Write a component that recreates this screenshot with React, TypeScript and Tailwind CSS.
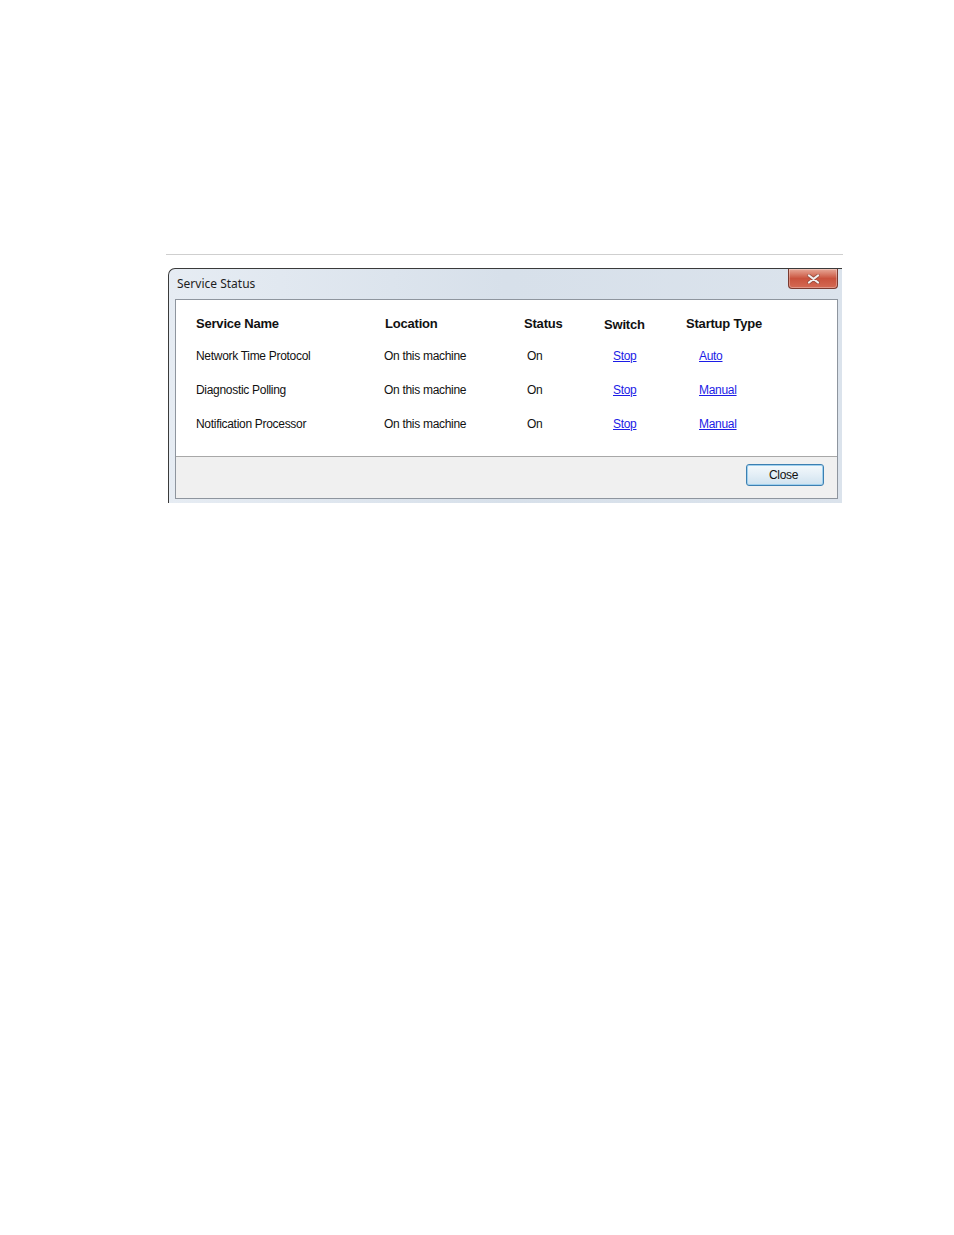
import React from "react";

const headers = [
  { t: "Service Name", w: "w-[188px]", pl: "pl-0" },
  { t: "Location", w: "w-[140px]", pl: "pl-[1px]" },
  { t: "Status", w: "w-[80px]", pl: "pl-0" },
  { t: "Switch", w: "w-[82px]", pl: "pl-0" },
  { t: "Startup Type", w: "w-[120px]", pl: "pl-0" },
];

const rows = [
  ["Network Time Protocol", "On this machine", "On", "Stop", "Auto"],
  ["Diagnostic Polling", "On this machine", "On", "Stop", "Manual"],
  ["Notification Processor", "On this machine", "On", "Stop", "Manual"],
];

export default function App() {
  return (
    <div className="w-[954px] h-[1235px] bg-white relative overflow-hidden" style={{ fontFamily: '"Liberation Sans", Arial, sans-serif' }}>
      <div className="pt-[254px]">
        <div className="ml-[166px] w-[677px] h-px bg-[#cfcfcf]" />
        <div className="mt-[13px] ml-[168px] w-[674px] h-[235px] rounded-tl-[7px] border-l border-t border-[#3a3a3a] bg-gradient-to-r from-[#e6ecf3] via-[#d7e0ea] to-[#dbe3ec] flex flex-col relative">
          {/* title bar */}
          <div className="h-[30px] flex items-start">
            <div className="pl-[8px] pt-[7px] text-[12px] leading-[16px] text-[#1e1e1e]" style={{ fontFamily: '"Noto Sans", "Open Sans", sans-serif' }}>
              Service Status
            </div>
            <div className="flex-1" />
            <div className="mr-[4px] w-[50px] h-[20px] rounded-b-[4px] border border-t-0 border-[#7a3a30] bg-gradient-to-b from-[#e6a898] via-[#c9523d] to-[#d46a54] flex items-center justify-center shadow-[inset_0_0_0_1px_rgba(255,255,255,0.3)]">
              <svg width="13" height="10" viewBox="0 0 13 10">
                <path d="M2 1.5 L11 8.5 M11 1.5 L2 8.5" stroke="#6a3a32" strokeWidth="3.6" strokeLinecap="round" opacity="0.5" />
                <path d="M2 1.5 L11 8.5 M11 1.5 L2 8.5" stroke="#f2f2f2" strokeWidth="2.2" strokeLinecap="round" />
              </svg>
            </div>
          </div>
          {/* client area */}
          <div className="ml-[6px] mr-[4px] mb-[4px] flex-1 border border-[#8e959e] flex flex-col">
            <div className="h-[156px] bg-white pl-[20px] pt-[16px] text-[#111]">
              <div className="flex h-[16px] items-center">
                {headers.map((h) => (
                  <div key={h.t} className={`${h.w} ${h.pl} text-[13px] font-bold leading-[16px] tracking-[-0.2px] whitespace-nowrap ${h.t === "Switch" ? "pt-[2px]" : ""}`}>
                    {h.t}
                  </div>
                ))}
              </div>
              <div className="flex flex-col gap-[18px] mt-[16px]">
                {rows.map((r, i) => (
                  <div key={i} className="flex h-[16px] items-center text-[12px] leading-[16px] tracking-[-0.3px] whitespace-nowrap">
                    <div className="w-[188px]">{r[0]}</div>
                    <div className="w-[140px]">{r[1]}</div>
                    <div className="w-[80px] pl-[3px]">{r[2]}</div>
                    <div className="w-[82px] pl-[9px]">
                      <span className="underline text-[#1c1ce6]">{r[3]}</span>
                    </div>
                    <div className="w-[120px] pl-[13px]">
                      <span className="underline text-[#1c1ce6]">{r[4]}</span>
                    </div>
                  </div>
                ))}
              </div>
            </div>
            <div className="h-px bg-[#a8a8a8]" />
            <div className="flex-1 bg-[#f0f0f0] flex justify-end items-start pt-[7px] pr-[13px]">
              <div className="w-[78px] h-[22px] pr-[3px] rounded-[3px] border border-[#3c7fb1] bg-gradient-to-b from-[#f4f9fc] via-[#e3eef6] to-[#cfe2ef] shadow-[inset_0_0_0_1px_#9fd0ee] flex items-center justify-center text-[12px] tracking-[-0.3px] text-[#111]">
                Close
              </div>
            </div>
          </div>
        </div>
      </div>
    </div>
  );
}
